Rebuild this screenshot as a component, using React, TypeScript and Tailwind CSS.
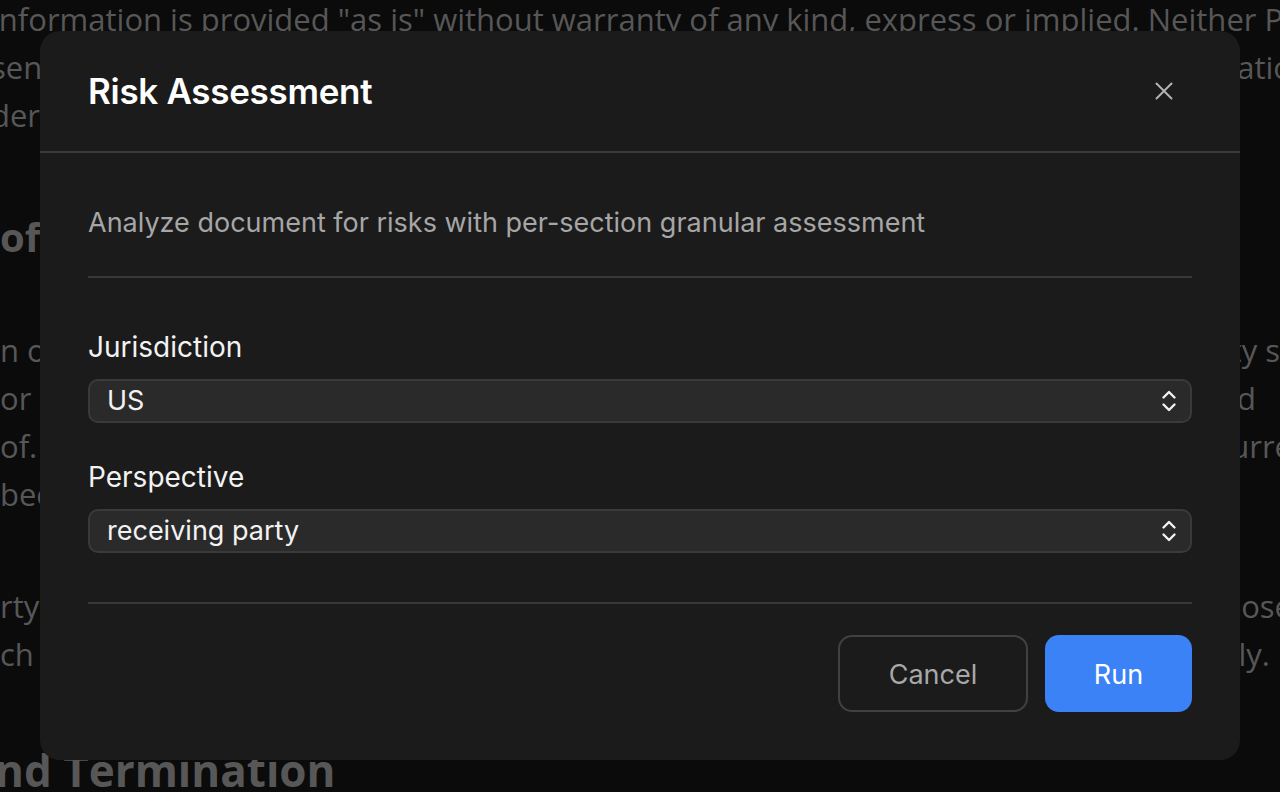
import React from 'react';

type Line = { left: string; right?: string; rightCls?: string };

const para1: Line[] = [
    { left: "information is provided \"as is\" without warranty of any kind, express or implied. Neither Party" },
    { left: "sents or warrants the accuracy or completeness of", right: "the Confidential Informatio" },
    { left: "dertakes any obligation to update such information." },
];

const para2: Line[] = [
    { left: "n of this Agreement shall commence on the Effective Date", right: "each Party s", rightCls: "mr-[12px]" },
    { left: "or obligations under this Agreement and shall continue", right: "and", rightCls: "mr-[36px]" },
    { left: "of. Notwithstanding the foregoing, obligations that have", right: "occurre" },
    { left: "been incurred prior to termination shall survive." },
];

const para3: Line[] = [
    { left: "rty may disclose Confidential Information to its representatives", right: "purpose" },
    { left: "ch disclosure is required by law and notice is given promptly.", right: "promptly.", rightCls: "mr-[22px]" },
];

function DocLine({ left, right, rightCls }: Line) {
    return (
        <div className="h-[48px] leading-[48px] flex justify-between gap-8 whitespace-nowrap overflow-hidden">
            <span>{left}</span>
            {right && <span className={rightCls}>{right}</span>}
        </div>
    );
}

function Chevrons() {
    return (
        <svg width="18" height="26" viewBox="0 0 18 26" fill="none" stroke="#f2f2f2" strokeWidth="2.4" strokeLinecap="round" strokeLinejoin="round">
            <path d="M3.5 9.5 L9 4 L14.5 9.5" />
            <path d="M3.5 16.5 L9 22 L14.5 16.5" />
        </svg>
    );
}

function SelectBox({ value }: { value: string }) {
    return (
        <div className="mt-[14px] h-[44px] rounded-[10px] border-2 border-[#3a3a3a] bg-[#2a2a2a] pl-[17px] pr-[12px] flex items-center justify-between">
            <span className="text-[27px] text-[#f2f2f2] pt-[1px]">{value}</span>
            <Chevrons />
        </div>
    );
}

export default function App() {
    return (
        <div className="relative w-[1280px] h-[792px] overflow-hidden bg-[#0b0b0b] font-['Inter','Noto_Sans',sans-serif]">
            {/* document behind the dialog */}
            <div className="ml-[-9px] mr-[-12px] mt-[-5px] text-[31px] text-[#575757] font-['Open_Sans','Noto_Sans',sans-serif]">
                <div>{para1.map((l, i) => <DocLine key={i} {...l} />)}</div>
                <div className="mt-[74px] ml-[9px] h-[48px] leading-[48px] text-[40px] font-bold whitespace-nowrap">of Confidential Information</div>
                <div className="mt-[65px] ml-[9px]">{para2.map((l, i) => <DocLine key={i} {...l} />)}</div>
                <div className="mt-[64px] ml-[9px]">{para3.map((l, i) => <DocLine key={i} {...l} />)}</div>
                <div className="mt-[68px] ml-[4px] h-[48px] leading-[48px] text-[44px] font-bold whitespace-nowrap">nd Termination</div>
            </div>

            {/* dialog */}
            <div className="absolute inset-0 pt-[31px] pl-[40px]">
                <div className="w-[1200px] h-[729px] rounded-[20px] bg-[#1b1b1b] flex flex-col">
                    <div className="h-[122px] shrink-0 border-b-2 border-[#3a3a3a] pl-[48px] pr-[56px] flex items-center justify-between">
                        <h2 className="text-[35px] font-semibold text-white tracking-[-0.3px]">Risk Assessment</h2>
                        <button className="w-10 h-10 flex items-center justify-center">
                            <svg width="18" height="18" viewBox="0 0 18 18" fill="none" stroke="#b3b3b3" strokeWidth="2" strokeLinecap="round">
                                <path d="M1.5 1.5 L16.5 16.5" />
                                <path d="M16.5 1.5 L1.5 16.5" />
                            </svg>
                        </button>
                    </div>

                    <div className="px-[48px] pt-[52px]">
                        <p className="text-[27px] leading-[36px] text-[#a6a6a6]">
                            Analyze document for risks with per-section granular assessment
                        </p>
                        <div className="mt-[35px] h-[2px] bg-[#383838]" />

                        <div className="mt-[51px]">
                            <label className="block text-[28px] leading-[36px] text-[#f2f2f2]">Jurisdiction</label>
                            <SelectBox value="US" />
                        </div>
                        <div className="mt-[36px]">
                            <label className="block text-[28px] leading-[36px] text-[#f2f2f2]">Perspective</label>
                            <SelectBox value="receiving party" />
                        </div>

                        <div className="mt-[49px] h-[2px] bg-[#383838]" />

                        <div className="mt-[31px] flex justify-end gap-[17px]">
                            <button className="w-[190px] h-[77px] pt-[4px] rounded-[14px] border-2 border-[#414141] text-[27px] text-[#a8a8a8]">
                                Cancel
                            </button>
                            <button className="w-[147px] h-[77px] pt-[4px] rounded-[14px] bg-[#3b82f6] text-[27px] text-white">
                                Run
                            </button>
                        </div>
                    </div>
                </div>
            </div>
        </div>
    );
}
